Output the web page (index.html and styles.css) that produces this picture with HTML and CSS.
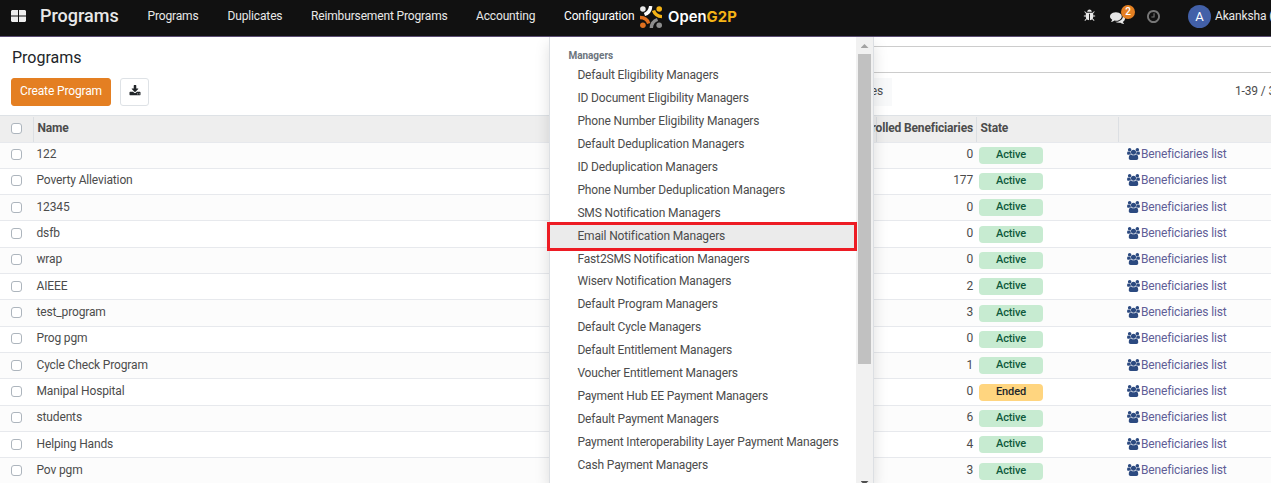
FILE: index.html
```
<!DOCTYPE html>
<html lang="en">
<head>
<meta charset="utf-8">
<title>Programs</title>
<link rel="stylesheet" href="styles.css">
</head>
<body>
<svg class="sprite" width="0" height="0">
<symbol id="users" viewBox="0 0 1920 1792"><path d="M593 896q-162 5-265 128h-134q-82 0-138-40.5t-56-118.5q0-353 124-353 6 0 43.500 21t97.500 42.500 119 21.500q67 0 133-23-5 37-5 66 0 139 81 256zm1071 637q0 120-73 189.500t-194 69.500h-874q-121 0-194-69.500t-73-189.500q0-53 3.500-103.500t14-109 26.500-108.500 43-97.500 62-81 85.500-53.500 111.500-20q10 0 43 21.500t73 48 107 48 135 21.500 135-21.500 107-48 73-48 43-21.500q61 0 111.500 20t85.500 53.500 62 81 43 97.500 26.500 108.500 14 109 3.500 103.500zm-1024-1277q0 106-75 181t-181 75-181-75-75-181 75-181 181-75 181 75 75 181zm704 384q0 159-112.500 271.500t-271.500 112.500-271.500-112.500-112.500-271.500 112.500-271.500 271.500-112.500 271.500 112.500 112.500 271.500zm576 225q0 78-56 118.500t-138 40.500h-134q-103-123-265-128 81-117 81-256 0-29-5-66 66 23 133 23 59 0 119-21.500t97.500-42.500 43.500-21q124 0 124 353zm-128-609q0 106-75 181t-181 75-181-75-75-181 75-181 181-75 181 75 75 181z"/></symbol>
</svg>

<header class="navbar">
  <svg class="apps" viewBox="0 0 15 12"><path d="M1 0h6v5.500H0V1zM8 0h6l1 1v4.500H8zM0 6.500h7V12H1l-1-1zM8 6.500h7V11l-1 1H8z"/></svg>
  <span class="brand">Programs</span>
  <nav class="menu">
    <span class="m1">Programs</span><span class="m2">Duplicates</span><span class="m3">Reimbursement Programs</span><span class="m4">Accounting</span><span class="m5">Configuration</span>
  </nav>
  <svg class="logo-mark" viewBox="0 0 22 22">
    <circle cx="2.900" cy="3" r="2.800" fill="#e8e8e8"/><circle cx="19.200" cy="3" r="2.800" fill="#f5b416"/>
    <circle cx="2.900" cy="19.200" r="2.800" fill="#e0701e"/><circle cx="19.200" cy="19.200" r="2.800" fill="#8e8e8e"/>
    <g fill="none" stroke-width="3.400"><path d="M10.700 0Q10.200 6.500 4.500 8.500" stroke="#fff"/><path d="M13.500 4.500Q15.500 10.300 22 10.600" stroke="#f5b416"/><path d="M0 11.500Q7 11.700 8.700 17.500" stroke="#e0701e"/><path d="M11.300 22Q11.600 15.500 17.500 13.500" stroke="#8e8e8e"/></g>
  </svg>
  <span class="logo-text">Open<b>G2P</b></span>
  <div class="systray">
    <svg class="bug" viewBox="0 0 1792 1792"><path d="M1696 960q0 26-19 45t-45 19h-224q0 171-67 290l208 209q19 19 19 45t-19 45q-18 19-45 19t-45-19l-198-197q-5 5-15 13t-42 28.500-65 36.500-82 29-97 13v-896h-128v896q-51 0-101.500-13.500t-87-33-66-39-43.500-32.500l-15-14-183 207q-20 21-48 21-24 0-43-16-19-18-20.500-44.500t15.500-46.500l202-227q-58-114-58-274h-224q-26 0-45-19t-19-45 19-45 45-19h224v-294l-173-173q-19-19-19-45t19-45 45-19 45 19l173 173h844l173-173q19-19 45-19t45 19 19 45-19 45l-173 173v294h224q26 0 45 19t19 45zm-480-576h-640q0-133 93.500-226.500t226.500-93.500 226.500 93.500 93.500 226.500z"/></svg>
    <span class="chat"><svg viewBox="0 0 1792 1792"><path d="M1408 768q0 139-94 257t-256.500 186.500-353.500 68.500q-86 0-176-16-124 88-278 128-36 9-86 16h-3q-11 0-20.500-8t-11.500-21q-1-3-1-6.500t.5-6.500 2-6l2.500-5 3.500-5.500 4-5 4.500-5 4-4.500q5-6 23-25t26-29.500 22.500-29 25-38.500 20.500-44q-124-72-195-177t-71-224q0-139 94-257t256.500-186.500 353.500-68.500 353.500 68.500 256.500 186.500 94 257zm384 256q0 120-71 224.500t-195 176.500q10 24 20.500 44t25 38.500 22.500 29 26 29.500 23 25q1 1 4 4.500t4.500 5 4 5 3.500 5.500l2.500 5 2 6 .5 6.500-1 6.500q-3 14-13 22t-22 7q-50-7-86-16-154-40-278-128-90 16-176 16-271 0-472-132 58 4 88 4 161 0 309-45t264-129q125-92 192-212t67-254q0-77-23-152 129 71 204 178t75 230z"/></svg><span class="badge">2</span></span>
    <svg class="clock" viewBox="128 128 1536 1536"><path d="M1024 544v448q0 14-9 23t-23 9h-320q-14 0-23-9t-9-23v-64q0-14 9-23t23-9h224v-352q0-14 9-23t23-9h64q14 0 23 9t9 23zm416 352q0-148-73-273t-198-198-273-73-273 73-198 198-73 273 73 273 198 198 273 73 273-73 198-198 73-273zm224 0q0 209-103 385.500t-279.500 279.500-385.500 103-385.500-103-279.500-279.500-103-385.500 103-385.500 279.500-279.500 385.500-103 385.500 103 279.500 279.500 103 385.500z"/></svg>
    <span class="avatar">A</span><span class="user">Akanksha (OpenG2P)</span>
  </div>
</header>

<section class="panel">
  <div class="left">
    <h1>Programs</h1>
    <div class="actions"><button class="create">Create Program</button><button class="export"><svg viewBox="0 0 1792 1664"><path d="M1344 1344q0-26-19-45t-45-19-45 19-19 45 19 45 45 19 45-19 19-45zm256 0q0-26-19-45t-45-19-45 19-19 45 19 45 45 19 45-19 19-45zm128-224v320q0 40-28 68t-68 28h-1472q-40 0-68-28t-28-68v-320q0-40 28-68t68-28h465l135 136q58 56 136 56t136-56l136-136h464q40 0 68 28t28 68zm-325-569q17 41-14 70l-448 448q-18 19-45 19t-45-19l-448-448q-31-29-14-70 17-39 59-39h256v-448q0-26 19-45t45-19h256q26 0 45 19t19 45v448h256q42 0 59 39z"/></svg></button></div>
  </div>
  <div class="right">
    <div class="search"></div>
    <div class="tools"><span class="favorites">Favorites</span><span class="pager">1-39 / 39</span></div>
  </div>
</section>

<main class="list">
  <div class="row head"><span class="cell check"><i></i></span><span class="cell name">Name</span><span class="cell count">Enrolled Beneficiaries</span><span class="cell state">State</span><span class="cell link"></span></div>
  <div class="row"><span class="check"><i></i></span><span class="name">122</span><span class="count">0</span><span class="state"><em>Active</em></span><a class="link"><svg><use href="#users"/></svg>Beneficiaries list</a></div>
  <div class="row"><span class="check"><i></i></span><span class="name">Poverty Alleviation</span><span class="count">177</span><span class="state"><em>Active</em></span><a class="link"><svg><use href="#users"/></svg>Beneficiaries list</a></div>
  <div class="row"><span class="check"><i></i></span><span class="name">12345</span><span class="count">0</span><span class="state"><em>Active</em></span><a class="link"><svg><use href="#users"/></svg>Beneficiaries list</a></div>
  <div class="row"><span class="check"><i></i></span><span class="name">dsfb</span><span class="count">0</span><span class="state"><em>Active</em></span><a class="link"><svg><use href="#users"/></svg>Beneficiaries list</a></div>
  <div class="row"><span class="check"><i></i></span><span class="name">wrap</span><span class="count">0</span><span class="state"><em>Active</em></span><a class="link"><svg><use href="#users"/></svg>Beneficiaries list</a></div>
  <div class="row"><span class="check"><i></i></span><span class="name">AIEEE</span><span class="count">2</span><span class="state"><em>Active</em></span><a class="link"><svg><use href="#users"/></svg>Beneficiaries list</a></div>
  <div class="row"><span class="check"><i></i></span><span class="name">test_program</span><span class="count">3</span><span class="state"><em>Active</em></span><a class="link"><svg><use href="#users"/></svg>Beneficiaries list</a></div>
  <div class="row"><span class="check"><i></i></span><span class="name">Prog pgm</span><span class="count">0</span><span class="state"><em>Active</em></span><a class="link"><svg><use href="#users"/></svg>Beneficiaries list</a></div>
  <div class="row"><span class="check"><i></i></span><span class="name">Cycle Check Program</span><span class="count">1</span><span class="state"><em>Active</em></span><a class="link"><svg><use href="#users"/></svg>Beneficiaries list</a></div>
  <div class="row"><span class="check"><i></i></span><span class="name">Manipal Hospital</span><span class="count">0</span><span class="state"><em class="ended">Ended</em></span><a class="link"><svg><use href="#users"/></svg>Beneficiaries list</a></div>
  <div class="row"><span class="check"><i></i></span><span class="name">students</span><span class="count">6</span><span class="state"><em>Active</em></span><a class="link"><svg><use href="#users"/></svg>Beneficiaries list</a></div>
  <div class="row"><span class="check"><i></i></span><span class="name">Helping Hands</span><span class="count">4</span><span class="state"><em>Active</em></span><a class="link"><svg><use href="#users"/></svg>Beneficiaries list</a></div>
  <div class="row"><span class="check"><i></i></span><span class="name">Pov pgm</span><span class="count">3</span><span class="state"><em>Active</em></span><a class="link"><svg><use href="#users"/></svg>Beneficiaries list</a></div>
</main>

<div class="dropdown">
  <div class="items">
    <h2>Managers</h2>
    <a>Default Eligibility Managers</a>
    <a>ID Document Eligibility Managers</a>
    <a>Phone Number Eligibility Managers</a>
    <a>Default Deduplication Managers</a>
    <a>ID Deduplication Managers</a>
    <a>Phone Number Deduplication Managers</a>
    <a>SMS Notification Managers</a>
    <a class="active">Email Notification Managers</a>
    <a>Fast2SMS Notification Managers</a>
    <a>Wiserv Notification Managers</a>
    <a>Default Program Managers</a>
    <a>Default Cycle Managers</a>
    <a>Default Entitlement Managers</a>
    <a>Voucher Entitlement Managers</a>
    <a>Payment Hub EE Payment Managers</a>
    <a>Default Payment Managers</a>
    <a>Payment Interoperability Layer Payment Managers</a>
    <a>Cash Payment Managers</a>
  </div>
  <div class="scrollbar"><span class="up"></span><span class="thumb"></span><span class="down"></span></div>
</div>
<div class="highlight"></div>
</body>
</html>
```
FILE: styles.css
```
* { box-sizing: border-box; }
body { margin: 0; width: 1271px; height: 483px; overflow: hidden; position: relative; background: #fff; color: #4c4c4c; font: 12px/18px Roboto, sans-serif; letter-spacing: -0.145px; }
svg { display: block; flex: none; }
.sprite { position: absolute; }

.navbar { display: flex; height: 37px; background: #111; border-bottom: 1px solid #5b4d74; color: #e8e8e8; white-space: nowrap; overflow: hidden; }
.navbar > * { flex: none; }
.apps { width: 15px; height: 12px; margin: 10px 0 0 11px; fill: #eee; }
.brand { width: 107.500px; margin-left: 14px; font-size: 18px; font-weight: 500; line-height: 32px; letter-spacing: 0; }
.menu { display: grid; grid-template-columns: 80px 83.500px 165px 88px 76px; line-height: 32px; }
.menu .m5 { color: #fff; }
.logo-mark { width: 22px; height: 22px; margin-top: 6px; }
.logo-text { width: 422px; margin-left: 6px; font: 600 14.800px/34px Inter, sans-serif; color: #fff; letter-spacing: 0.050px; }
.logo-text b { color: #f5b416; font-weight: 700; }
.systray { display: flex; }
.bug { width: 13px; height: 13px; margin: 9px 0 0 -7px; fill: #e8e8e8; }
.chat { position: relative; width: 15px; margin: 10px 0 0 14px; }
.chat svg { width: 15px; height: 15px; fill: #e8e8e8; }
.badge { position: absolute; left: 11px; top: -5px; width: 14px; height: 14px; border-radius: 7px; background: #e47f22; color: #fff; font-size: 10px; font-weight: 500; line-height: 14px; text-align: center; letter-spacing: 0; }
.clock { width: 13px; height: 13px; margin: 10px 0 0 22px; fill: #777; }
.avatar { width: 23px; height: 23px; margin: 5px 4px 0 28px; border-radius: 50%; background: #4260a8; color: #fff; font-size: 13px; line-height: 23px; text-align: center; }
.user { line-height: 32px; }

.panel { display: flex; height: 78px; overflow: hidden; }
.left { flex: none; width: 636px; padding: 11px 0 0 12px; }
h1 { margin: 0; font-size: 16px; font-weight: 400; line-height: 20px; letter-spacing: 0; color: #212529; }
.actions { display: flex; gap: 9px; margin: 10px 0 0 -1px; }
button { height: 28px; padding: 0; border-radius: 3px; font: 12px/24px Roboto, sans-serif; letter-spacing: -0.135px; }
.create { width: 100px; border: 1px solid #e47f22; background: #e47f22; color: #fff; padding-bottom: 2px; }
.export { width: 29px; border: 1px solid #dee2e6; background: #fff; }
.export svg { width: 12px; height: 11px; margin: -3px auto 0; fill: #212529; }
.right { flex: none; width: 635px; padding-top: 9px; }
.search { height: 27px; border: solid #ccc; border-width: 1px 0; }
.tools { display: flex; justify-content: space-between; width: 654px; margin-top: 5px; line-height: 27px; white-space: nowrap; }
.favorites { width: 256px; height: 28px; padding-right: 9px; background: #f8f9fa; text-align: right; }
.pager { width: 55px; }

.row { display: grid; grid-template-columns: 34px 843px 100px 142px 152px; height: 26.333px; border-bottom: 1px solid #e7e9ed; line-height: 23.400px; white-space: nowrap; }
.row:nth-child(even) { background: #fcfcfc; }
.row.head { height: 27.500px; padding-top: 1px; border-top: 1px solid #dee2e6; background: #eee; line-height: 22px; font-weight: 700; }
.cell { border-right: 1px solid #dcdfe3; }
.cell.link { border: 0; }
.check { padding: 6.600px 0 0 11px; }
.head .check { padding-top: 6px; }
.check i { display: block; width: 11px; height: 11px; border: 1px solid #adb5bd; border-radius: 3px; background: #fff; }
.name { padding-left: 3.500px; }
.count { display: flex; justify-content: flex-end; padding-right: 3px; }
.state { padding-left: 3.500px; }
.row:not(.head) .state { padding: 4.300px 0 0 2px; }
.row:not(.head) .name { padding: 0.500px 0 0 2.500px; }
.row:not(.head) .count { padding: 0.500px 4px 0 0; }
em { display: block; width: 64px; height: 17px; border-radius: 4px; background: #c7ebd1; color: #0f5a3c; font-size: 11px; font-style: normal; font-weight: 500; line-height: 15px; text-align: center; }
em.ended { background: #ffd57f; color: #212529; }
.link { display: flex; padding: 0.500px 0 0 8px; color: #5f5e97; }
.link svg { width: 13px; height: 12px; margin: 5px 1px 0 0; fill: #2c4a80; }

.dropdown { position: absolute; left: 549px; top: 37px; width: 325px; height: 446px; display: flex; border: solid #dcdfe3; border-width: 0 1px; background: #fff; box-shadow: 0 7px 14px rgba(0,0,0,.13); overflow: hidden; clip-path: inset(0 -20px -20px -20px); }
.items { width: 306px; padding-top: 10px; }
h2 { margin: 0; padding-left: 18.500px; font-size: 10px; font-weight: 700; line-height: 17px; letter-spacing: -0.050px; color: #6c757d; }
.items a { display: block; height: 22.940px; padding-left: 27.400px; line-height: 22.200px; white-space: nowrap; }
.items .active { background: #ebebeb; }
.scrollbar { width: 17px; padding: 7px 2px 0; background: #f1f1f1; }
.scrollbar span { display: block; }
.up { margin: 0 auto; width: 8px; height: 4px; background: #a3a3a3; clip-path: polygon(50% 0, 100% 100%, 0 100%); }
.thumb { width: 13px; height: 310px; margin-top: 6px; background: #c1c1c1; }
.down { margin: 117px auto 0; width: 8px; height: 4px; background: #505050; clip-path: polygon(0 0, 100% 0, 50% 100%); }
.highlight { position: absolute; left: 547px; top: 222px; width: 310px; height: 29px; border: 3px solid #ed1c24; }
```
